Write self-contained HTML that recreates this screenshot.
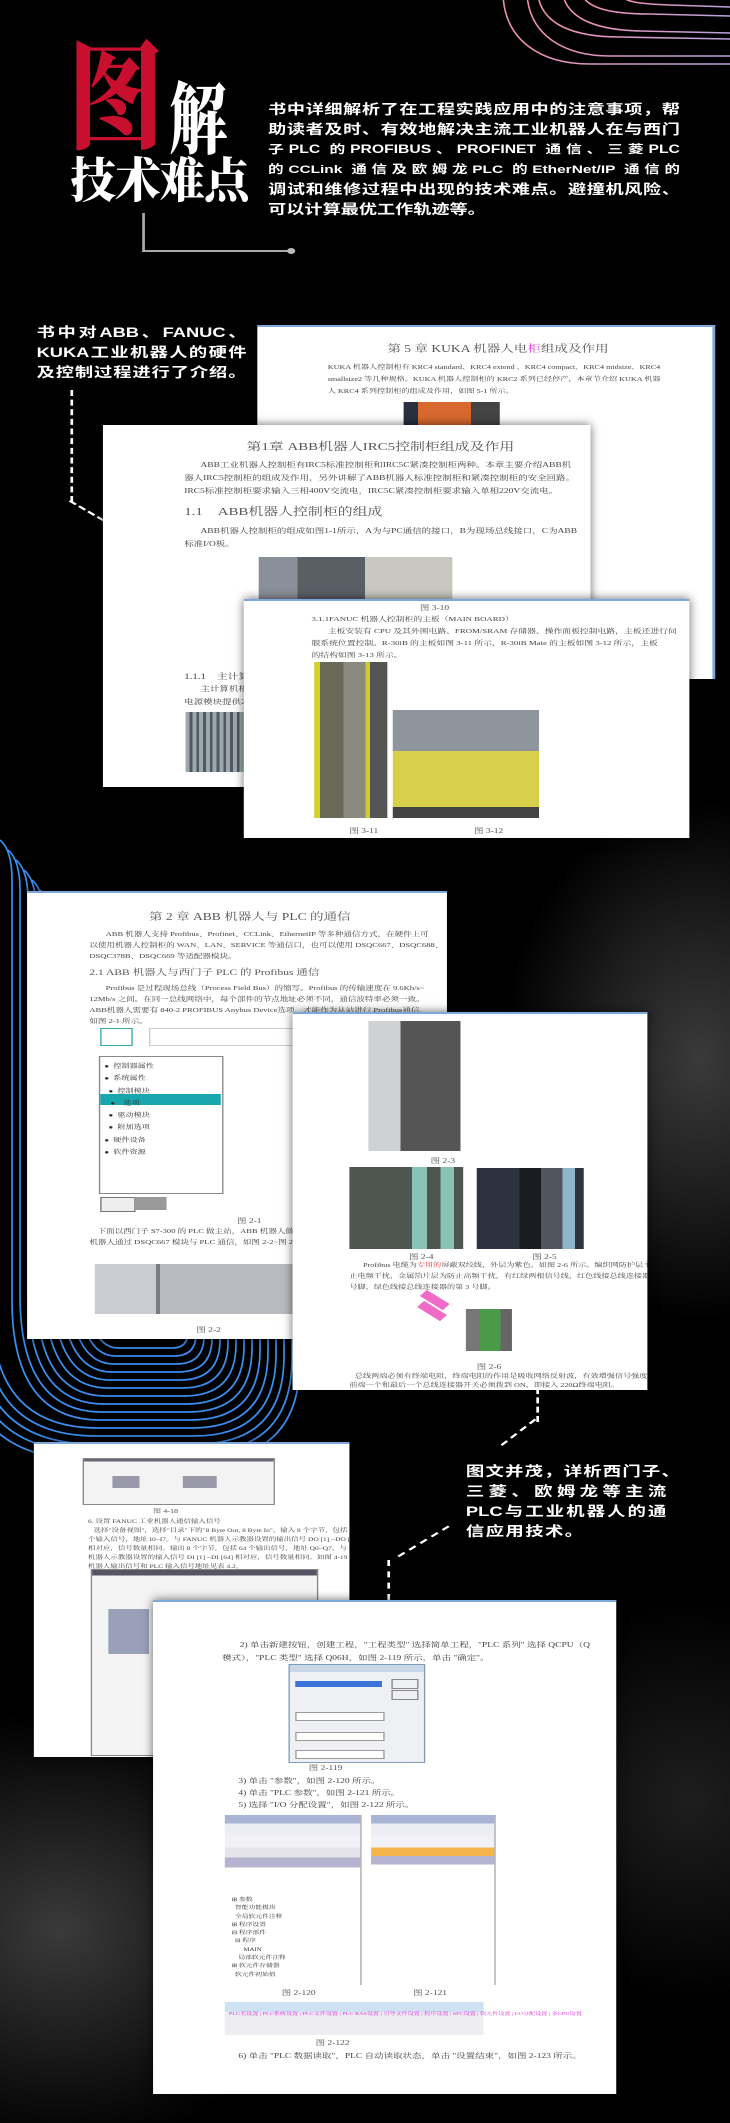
<!DOCTYPE html>
<html><head><meta charset="utf-8">
<style>
html,body{margin:0;padding:0;background:#000;}
body{width:730px;height:2123px;position:relative;overflow:hidden;
background:
radial-gradient(ellipse 200px 260px at 700px 1060px,#3a3a3a 0%,#1c1c1c 55%,rgba(0,0,0,0) 100%),
radial-gradient(ellipse 260px 220px at 60px 1930px,#3a3a3a 0%,#1a1a1a 55%,rgba(0,0,0,0) 100%),
radial-gradient(ellipse 200px 200px at 690px 1800px,#1e1e1e 0%,rgba(0,0,0,0) 100%),
#000;}
#bg{position:absolute;left:0;top:0;}
#c{position:absolute;left:0;top:0;width:539px;height:2123px;transform:scaleX(1.35436);transform-origin:0 0;
font-family:"Liberation Sans","Noto Sans CJK SC",sans-serif;}
.a{position:absolute;white-space:nowrap;}
.doc{position:absolute;background:#fff;border-top:2px solid #7ea7db;box-shadow:0 0 8px rgba(0,0,0,.6);overflow:hidden;}
.t{position:absolute;white-space:nowrap;font-family:"Liberation Serif","Noto Serif CJK SC",serif;color:#444;font-size:7px;line-height:1;}
.h{font-size:10px;color:#555;}
.cap{font-size:7px;color:#555;}
.img{position:absolute;}
.wt{color:#fff;font-weight:bold;}
.para div{height:20px;line-height:20px;text-align:justify;text-align-last:justify;white-space:nowrap;overflow:visible;}
</style></head><body>
<svg id="bg" width="730" height="2123" viewBox="0 0 730 2123">
<defs>
<linearGradient id="pk" x1="0" x2="1" y1="0" y2="0"><stop offset="0" stop-color="#ef8fae"/><stop offset="1" stop-color="#b7a3dd"/></linearGradient>
</defs>
<g fill="none" stroke="url(#pk)" stroke-width="1.6">
<path d="M503 -5 C505 40 540 64 590 64 L730 64"/>
<path d="M527 -5 C530 36 565 56 610 56 L730 56"/>
<path d="M538 -5 C542 25 575 37 620 37 L730 39"/>
<path d="M563 -5 C568 18 595 30 640 31 L730 33"/>
<path d="M582 -5 C588 8 610 14 650 14 L730 16"/>
<path d="M620 -5 C625 2 640 4 670 5 L730 7"/>
</g>
<g fill="none" stroke="#3a8ff0" stroke-width="1.7">
<path d="M-40 820 L-40 1330 Q-40 1460 90 1460 L200 1460 Q300 1460 300 1360 L300 1200"/>
<path d="M-32 820 L-32 1325 Q-32 1452 92 1452 L198 1452 Q292 1452 292 1358 L292 1200"/>
<path d="M-24 820 L-24 1320 Q-24 1444 94 1444 L196 1444 Q284 1444 284 1356 L284 1200"/>
<path d="M-16 820 L-16 1315 Q-16 1436 96 1436 L194 1436 Q276 1436 276 1354 L276 1200"/>
<path d="M-8 830 L-8 1310 Q-8 1428 98 1428 L192 1428 Q268 1428 268 1352 L268 1200"/>
<path d="M0 840 Q12 850 12 880 L12 1300 Q12 1420 100 1420 L190 1420 Q260 1420 260 1350 L260 1200"/>
<path d="M8 850 Q20 860 20 890 L20 1295 Q20 1412 102 1412 L188 1412 Q252 1412 252 1348 L252 1200"/>
<path d="M16 860 Q28 870 28 900 L28 1290 Q28 1404 104 1404 L186 1404 Q244 1404 244 1346 L244 1200"/>
<path d="M24 870 Q36 880 36 910 L36 1285 Q36 1396 106 1396 L184 1396 Q236 1396 236 1344 L236 1200"/>
<path d="M32 880 Q44 890 44 920 L44 1280 Q44 1388 108 1388 L182 1388 Q228 1388 228 1342 L228 1200"/>
<path d="M40 890 Q52 900 52 930 L52 1275 Q52 1380 110 1380 L180 1380 Q220 1380 220 1340 L220 1200"/>
<path d="M48 900 Q60 910 60 940 L60 1270 Q60 1372 112 1372 L178 1372 Q212 1372 212 1338 L212 1200"/>
<path d="M56 910 Q68 920 68 950 L68 1265 Q68 1364 114 1364 L176 1364 Q204 1364 204 1336 L204 1200"/>
<path d="M64 920 Q76 930 76 960 L76 1260 Q76 1356 116 1356 L174 1356 Q196 1356 196 1334 L196 1200"/>
<path d="M72 930 Q84 940 84 970 L84 1255 Q84 1348 118 1348 L172 1348 Q188 1348 188 1332 L188 1200"/>
</g>
</svg>
<div id="c">
<div class="a" style="left:50px;top:24px;font-size:118px;line-height:128px;color:#c8102e;font-family:'Noto Serif CJK SC',serif;font-weight:900;transform:scaleX(.6);transform-origin:0 0;">图</div>
<div class="a" style="left:125px;top:72px;font-size:78px;line-height:84px;color:#fff;font-family:'Noto Serif CJK SC',serif;font-weight:900;transform:scaleX(.55);transform-origin:0 0;">解</div>
<div class="a" style="left:52px;top:152px;font-size:48px;line-height:50px;color:#fff;font-family:'Noto Serif CJK SC',serif;font-weight:900;transform:scaleX(.7);transform-origin:0 0;letter-spacing:-1px;">技术难点</div>
<div class="a para wt" style="left:198px;top:100px;width:304px;font-size:13.4px;white-space:normal;">
<div>书中详细解析了在工程实践应用中的注意事项，帮</div>
<div>助读者及时、有效地解决主流工业机器人在与西门</div>
<div style="font-size:11.6px;">子PLC 的PROFIBUS、PROFINET 通信、三菱PLC</div>
<div style="font-size:11.4px;">的CCLink 通信及欧姆龙PLC 的EtherNet/IP 通信的</div>
<div>调试和维修过程中出现的技术难点。避撞机风险、</div>
<div style="text-align-last:left;">可以计算最优工作轨迹等。</div>
</div>
<div class="a" style="left:105px;top:213px;width:2px;height:39px;background:#aaa;"></div>
<div class="a" style="left:105px;top:250px;width:110px;height:2px;background:#aaa;"></div>
<div class="a" style="left:212px;top:248px;width:6px;height:6px;border-radius:50%;background:#bbb;"></div>

<div class="a para wt" style="left:27px;top:323px;width:155px;font-size:13.5px;white-space:normal;">
<div>书中对ABB、FANUC、</div>
<div>KUKA工业机器人的硬件</div>
<div>及控制过程进行了介绍。</div>
</div>
<div class="a" style="left:52px;top:390px;height:112px;border-left:2px dashed #fff;"></div>
<div class="a" style="left:52px;top:500px;width:32px;border-top:2px dashed #fff;transform:rotate(38deg);transform-origin:0 0;"></div>

<div class="doc" style="left:190px;top:325px;width:336px;height:352px;border-right:2px solid #7ea7db;">
<div class="t h" style="left:96px;top:18px;">第 5 章 KUKA 机器人电<span style="color:#e040e0">柜</span>组成及作用</div>
<div class="t" style="left:52px;top:38px;font-size:6px;">KUKA 机器人控制柜有 KRC4 standard、KRC4 extend 、KRC4 compact、KRC4 midsize、KRC4</div>
<div class="t" style="left:52px;top:50px;font-size:6px;">smallsize2 等几种规格。KUKA 机器人控制柜的 KRC2 系列已经停产，本章节介绍 KUKA 机器</div>
<div class="t" style="left:52px;top:62px;font-size:6px;">人 KRC4 系列控制柜的组成及作用，如图 5-1 所示。</div>
<div class="img" style="left:108px;top:75px;width:71px;height:30px;background:linear-gradient(90deg,#2a3040 0 15%,#d8682e 15% 70%,#444 70%);"></div>
</div>

<div class="doc" style="left:76px;top:425px;width:360px;height:362px;border-top:none;">
<div class="t h" style="left:106px;top:17px;font-size:11px;">第1章 ABB机器人IRC5控制柜组成及作用</div>
<div class="t" style="left:72px;top:37px;">ABB工业机器人控制柜有IRC5标准控制柜和IRC5C紧凑控制柜两种。本章主要介绍ABB机</div>
<div class="t" style="left:60px;top:50px;">器人IRC5控制柜的组成及作用，另外讲解了ABB机器人标准控制柜和紧凑控制柜的安全回路。</div>
<div class="t" style="left:60px;top:63px;">IRC5标准控制柜要求输入三相400V交流电，IRC5C紧凑控制柜要求输入单相220V交流电。</div>
<div class="t h" style="left:60px;top:82px;font-size:11px;">1.1　ABB机器人控制柜的组成</div>
<div class="t" style="left:72px;top:103px;">ABB机器人控制柜的组成如图1-1所示，A为与PC通信的接口，B为现场总线接口，C为ABB</div>
<div class="t" style="left:60px;top:116px;">标准I/O板。</div>
<div class="img" style="left:115px;top:132px;width:143px;height:45px;background:linear-gradient(90deg,#8a8f9a 0 20%,#5a5f66 20% 55%,#c8c8c0 55% 100%);"></div>
<div class="t" style="left:60px;top:248px;font-size:8px;">1.1.1　主计算机</div>
<div class="t" style="left:72px;top:261px;">主计算机相当</div>
<div class="t" style="left:60px;top:274px;">电源模块提供24V</div>
<div class="img" style="left:61px;top:287px;width:45px;height:60px;background:repeating-linear-gradient(90deg,#9aa 0 3px,#556 3px 5px);"></div>
</div>

<div class="doc" style="left:180px;top:599px;width:329px;height:237px;">
<div class="t cap" style="left:130px;top:4px;">图 3-10</div>
<div class="t" style="left:50px;top:16px;font-size:6.5px;">3.1.1FANUC 机器人控制柜的主板（MAIN BOARD）</div>
<div class="t" style="left:62px;top:28px;font-size:6.5px;">主板安装有 CPU 及其外围电路、FROM/SRAM 存储器、操作面板控制电路，主板还进行伺</div>
<div class="t" style="left:50px;top:40px;font-size:6.5px;">服系统位置控制。R-30iB 的主板如图 3-11 所示，R-30iB Mate 的主板如图 3-12 所示，主板</div>
<div class="t" style="left:50px;top:52px;font-size:6.5px;">的结构如图 3-13 所示。</div>
<div class="img" style="left:52px;top:61px;width:54px;height:156px;background:linear-gradient(90deg,#d9cf2a 0 8%,#6a6a58 8% 40%,#8a8a80 40% 70%,#d4c930 70% 76%,#555 76%);"></div>
<div class="img" style="left:110px;top:109px;width:108px;height:108px;background:linear-gradient(180deg,#8e959c 0 38%,#d8d04a 38% 90%,#444 90%);"></div>
<div class="t cap" style="left:78px;top:227px;">图 3-11</div>
<div class="t cap" style="left:170px;top:227px;">图 3-12</div>
</div>

<div class="doc" style="left:20px;top:891px;width:310px;height:446px;">
<div class="t h" style="left:90px;top:20px;">第 2 章 ABB 机器人与 PLC 的通信</div>
<div class="t" style="left:58px;top:39px;font-size:6.3px;">ABB 机器人支持 Profibus、Profinet、CCLink、EthernetIP 等多种通信方式，在硬件上可</div>
<div class="t" style="left:46px;top:50px;font-size:6.3px;">以使用机器人控制柜的 WAN、LAN、SERVICE 等通信口，也可以使用 DSQC667、DSQC688、</div>
<div class="t" style="left:46px;top:61px;font-size:6.3px;">DSQC378B、DSQC669 等适配器模块。</div>
<div class="t" style="left:46px;top:75px;font-size:8.5px;color:#555;">2.1 ABB 机器人与西门子 PLC 的 Profibus 通信</div>
<div class="t" style="left:58px;top:93px;font-size:6.3px;">Profibus 是过程现场总线（Process Field Bus）的缩写。Profibus 的传输速度在 9.6Kb/s~</div>
<div class="t" style="left:46px;top:104px;font-size:6.3px;">12Mb/s 之间。在同一总线网络中，每个部件的节点地址必须不同，通信波特率必须一致。</div>
<div class="t" style="left:46px;top:115px;font-size:6.3px;">ABB机器人需要有 840-2 PROFIBUS Anybus Device选项，才能作为从站进行 Profibus通信，</div>
<div class="t" style="left:46px;top:126px;font-size:6.3px;">如图 2-1 所示。</div>
<div class="img" style="left:54px;top:135px;width:22px;height:16px;border:1px solid #3aa;"></div>
<div class="img" style="left:90px;top:135px;width:150px;height:16px;border:1px solid #ccc;"></div>
<div class="img" style="left:53px;top:163px;width:90px;height:136px;border:1px solid #888;"></div>
<div class="img" style="left:54px;top:201px;width:89px;height:11px;background:#17a7ad;"></div>
<div class="t" style="left:57px;top:168px;font-size:6px;color:#333;line-height:12.3px;white-space:pre;">●  控制器属性
●  系统属性
  ●  控制模块
   ●    选项
  ●  驱动模块
  ●  附加选项
●  硬件设备
●  软件资源</div>
<div class="img" style="left:54px;top:304px;width:24px;height:13px;border:1px solid #777;background:#eee;"></div>
<div class="img" style="left:79px;top:304px;width:24px;height:13px;background:#999;"></div>
<div class="t cap" style="left:155px;top:325px;">图 2-1</div>
<div class="t" style="left:52px;top:336px;font-size:6.3px;">下面以西门子 S7-300 的 PLC 做主站，ABB 机器人做从站为</div>
<div class="t" style="left:46px;top:347px;font-size:6.3px;">机器人通过 DSQC667 模块与 PLC 通信，如图 2-2~图 2-5 所示</div>
<div class="img" style="left:50px;top:371px;width:150px;height:50px;background:linear-gradient(90deg,#c9ccd0 0 30%,#7a7d80 30% 32%,#b8bbbf 32% 100%);"></div>
<div class="t cap" style="left:125px;top:434px;">图 2-2</div>
</div>

<div class="doc" style="left:216px;top:1012px;width:262px;height:376px;">
<div class="img" style="left:56px;top:7px;width:68px;height:130px;background:linear-gradient(90deg,#cfd1d3 0 35%,#555 35% 100%);"></div>
<div class="t cap" style="left:102px;top:144px;">图 2-3</div>
<div class="img" style="left:42px;top:153px;width:84px;height:82px;background:linear-gradient(90deg,#4d5650 0 55%,#8ac3b6 55% 68%,#4d5650 68% 80%,#8ac3b6 80% 92%,#4d5650 92%);"></div>
<div class="img" style="left:136px;top:154px;width:79px;height:81px;background:linear-gradient(90deg,#2d3240 0 40%,#1a1c22 40% 60%,#50555e 60% 80%,#8fb6c8 80% 92%,#2d3240 92%);"></div>
<div class="t cap" style="left:86px;top:240px;">图 2-4</div>
<div class="t cap" style="left:177px;top:240px;">图 2-5</div>
<div class="t" style="left:52px;top:249px;font-size:6px;">Profibus 电缆为<span style="color:#e33">专用的</span>屏蔽双绞线，外层为紫色，如图 2-6 所示。编织网防护层主要防</div>
<div class="t" style="left:42px;top:260px;font-size:6px;">止电频干扰，金属箔片层为防止高频干扰，有红绿两根信号线，红色线接总线连接器的第 8</div>
<div class="t" style="left:42px;top:271px;font-size:6px;">号脚，绿色线接总线连接器的第 3 号脚。</div>
<div class="img" style="left:94px;top:282px;width:22px;height:8px;background:#f06ac8;transform:rotate(40deg);"></div>
<div class="img" style="left:92px;top:293px;width:22px;height:8px;background:#f06ac8;transform:rotate(40deg);"></div>
<div class="img" style="left:128px;top:295px;width:34px;height:42px;background:linear-gradient(90deg,#777 0 30%,#4a9a4a 30% 75%,#666 75%);"></div>
<div class="t cap" style="left:136px;top:350px;">图 2-6</div>
<div class="t" style="left:46px;top:360px;font-size:6px;">总线两端必须有终端电阻，终端电阻的作用是吸收网络反射波，有效增强信号强度。</div>
<div class="t" style="left:42px;top:369px;font-size:6px;">前端一个和最后一个总线连接器开关必须拨到 ON，即接入 220Ω终端电阻。</div>
</div>

<div class="a" style="left:396px;top:1388px;height:34px;border-left:2px dashed #fff;"></div>
<div class="a" style="left:396px;top:1420px;width:36px;border-top:2px dashed #fff;transform:rotate(134deg);transform-origin:0 0;"></div>
<div class="a para wt" style="left:344px;top:1462px;width:158px;font-size:13.6px;white-space:normal;">
<div>图文并茂，详析西门子、</div>
<div style="width:148px;">三菱、欧姆龙等主流</div>
<div style="width:148px;">PLC与工业机器人的通</div>
<div style="text-align-last:left;letter-spacing:1px;">信应用技术。</div>
</div>
<div class="a" style="left:332px;top:1527px;width:48px;border-top:2px dashed #fff;transform:rotate(141deg);transform-origin:0 0;"></div>
<div class="a" style="left:286px;top:1560px;height:40px;border-left:2px dashed #fff;"></div>

<div class="doc" style="left:25px;top:1442px;width:233px;height:313px;">
<div class="img" style="left:36px;top:14px;width:140px;height:45px;border:1px solid #888;background:linear-gradient(180deg,#667 0 6%,#f3f3f3 6%);"></div>
<div class="img" style="left:58px;top:32px;width:20px;height:12px;background:#99a;"></div>
<div class="img" style="left:110px;top:32px;width:25px;height:12px;background:#99a;"></div>
<div class="t cap" style="left:88px;top:65px;font-size:6px;">图 4-18</div>
<div class="t" style="left:40px;top:74px;font-size:5.5px;line-height:9px;white-space:pre;">6. 设置 FANUC 工业机器人通信输入信号
   选择"设备视图"，选择"目录"下的"8 Byte Out, 8 Byte In"，输入 8 个字节，包括 64
个输入信号，地址 I0~I7。与 FANUC 机器人示教器设置的输出信号 DO [1] ~DO [64]
相对应，信号数量相同。输出 8 个字节，包括 64 个输出信号，地址 Q0~Q7，与 FANUC
机器人示教器设置的输入信号 DI [1] ~DI [64] 相对应，信号数量相同。如图 4-19 所示。
机器人输出信号和 PLC 输入信号地址见表 4.2。</div>
<div class="img" style="left:42px;top:125px;width:166px;height:185px;border:1px solid #888;background:linear-gradient(180deg,#556 0 3%,#f4f4f4 3%);"></div>
<div class="img" style="left:55px;top:165px;width:30px;height:45px;background:#9aa0b8;"></div>
</div>

<div class="doc" style="left:113px;top:1600px;width:342px;height:492px;">
<div class="t" style="left:64px;top:40px;font-size:7px;">2) 单击新建按钮，创建工程，"工程类型" 选择简单工程，"PLC 系列" 选择 QCPU（Q</div>
<div class="t" style="left:51px;top:53px;font-size:7px;">模式），"PLC 类型" 选择 Q06H，如图 2-119 所示，单击 "确定"。</div>
<div class="img" style="left:100px;top:62px;width:99px;height:97px;border:1px solid #7f9db9;background:linear-gradient(180deg,#c9d6e8 0 7%,#eef0f4 7%);"></div>
<div class="img" style="left:105px;top:79px;width:64px;height:6px;background:#3b73d6;"></div>
<div class="img" style="left:176px;top:77px;width:18px;height:8px;border:1px solid #888;"></div>
<div class="img" style="left:176px;top:88px;width:18px;height:8px;border:1px solid #888;"></div>
<div class="img" style="left:105px;top:110px;width:64px;height:7px;border:1px solid #999;background:#fff;"></div>
<div class="img" style="left:105px;top:130px;width:64px;height:7px;border:1px solid #999;background:#fff;"></div>
<div class="img" style="left:105px;top:148px;width:64px;height:7px;border:1px solid #999;background:#fff;"></div>
<div class="t cap" style="left:115px;top:163px;">图 2-119</div>
<div class="t" style="left:63px;top:176px;font-size:7px;">3) 单击 "参数"，如图 2-120 所示。</div>
<div class="t" style="left:63px;top:188px;font-size:7px;">4) 单击 "PLC 参数"，如图 2-121 所示。</div>
<div class="t" style="left:63px;top:200px;font-size:7px;">5) 选择 "I/O 分配设置"，如图 2-122 所示。</div>
<div class="img" style="left:53px;top:213px;width:100px;height:170px;border-right:1px solid #aaa;background:linear-gradient(180deg,#a9b4d4 0 5%,#eceef4 5% 12%,#f2f2f6 12% 19%,#e4e4ea 19% 25%,#b5b3cf 25% 31%,#fff 31%);"></div>
<div class="img" style="left:161px;top:213px;width:91px;height:170px;border-right:1px solid #aaa;background:linear-gradient(180deg,#a9b4d4 0 5%,#eceef4 5% 12%,#f2f2f6 12% 19%,#f5b54a 19% 24%,#b5b3cf 24% 29%,#fff 29%);"></div>
<div class="t" style="left:58px;top:295px;font-size:5px;line-height:8.3px;white-space:pre;color:#333;">⊞ 参数
  智能功能模块
  全局软元件注释
⊞ 程序设置
⊟ 程序部件
  ⊟ 程序
       MAIN
    局部软元件注释
⊞ 软元件存储器
  软元件初始值</div>
<div class="t cap" style="left:95px;top:388px;">图 2-120</div>
<div class="t cap" style="left:192px;top:388px;">图 2-121</div>
<div class="img" style="left:53px;top:400px;width:191px;height:33px;background:linear-gradient(180deg,#cfe2f3 0 30%,#eeeef2 30%);"></div>
<div class="t" style="left:56px;top:410px;font-size:4.5px;color:#e030e0;">PLC名设置 | PLC系统设置 | PLC文件设置 | PLC RAS设置 | 引导文件设置 | 程序设置 | SFC设置 | 软元件设置 | I/O分配设置 | 多CPU设置</div>
<div class="t cap" style="left:120px;top:438px;">图 2-122</div>
<div class="t" style="left:63px;top:451px;font-size:7px;">6) 单击 "PLC 数据读取"，PLC 自动读取状态，单击 "设置结束"，如图 2-123 所示。</div>
</div>
</div>
</body></html>
